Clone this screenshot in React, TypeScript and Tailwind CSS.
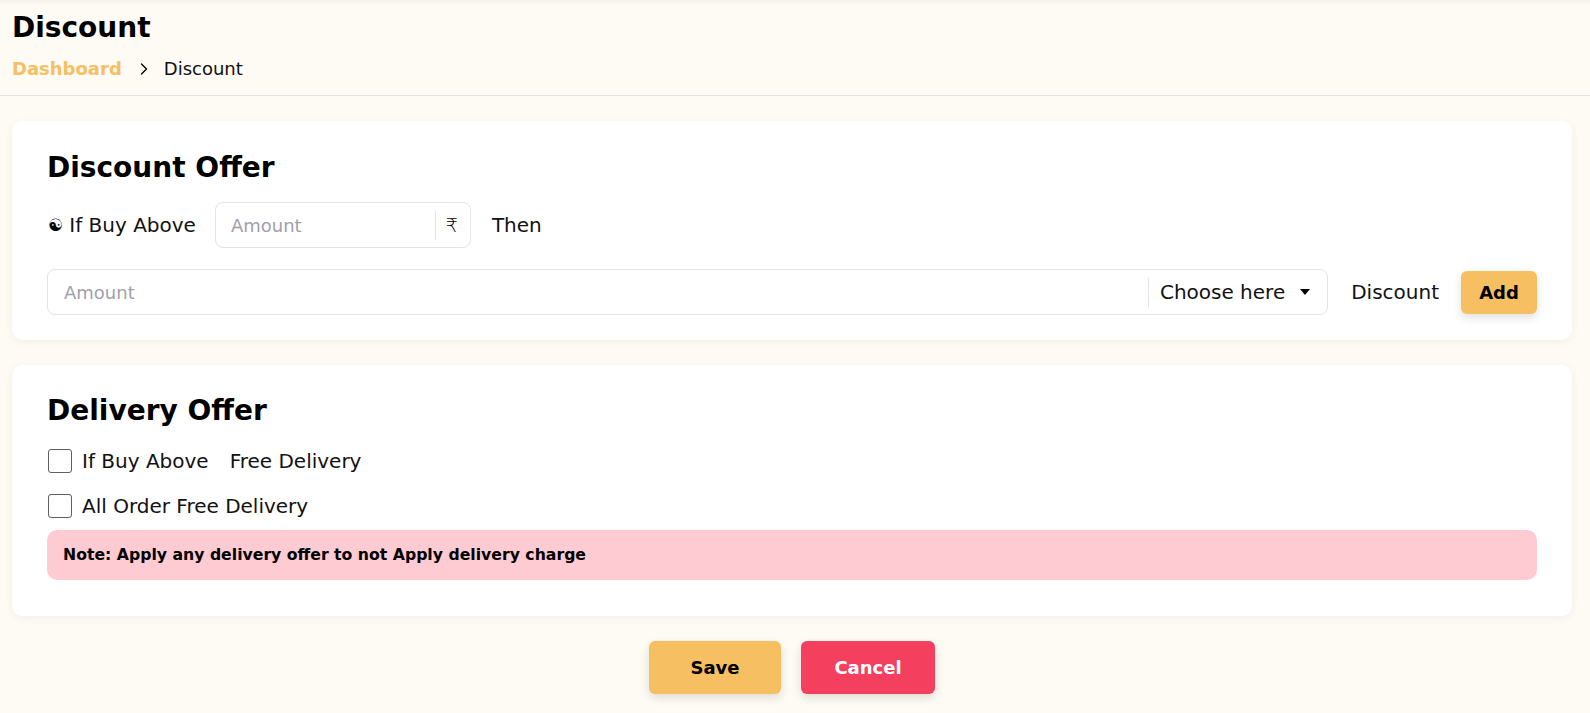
import React from 'react';
import { ChevronRight } from 'lucide-react';

const Checkbox = () => (
  <span className="w-6 h-6 rounded-[3px] border-[1.5px] border-[#5f5f5f] bg-white shrink-0" />
);

export default function App() {
  return (
    <div className="min-h-screen bg-[#fefaf4] text-black font-['DejaVu_Sans','Noto_Sans',sans-serif]">
      <header className="px-3 pt-[11px] pb-[14px] border-b border-[#e4e2e8] shadow-[inset_0_6px_6px_-6px_rgba(0,0,0,0.08)]">
        <h1 className="text-[28px] leading-[34px] font-bold">Discount</h1>
        <nav className="mt-[12px] flex items-center h-6">
          <span className="text-[18px] leading-6 font-bold text-[#f6bf62]">Dashboard</span>
          <ChevronRight size={20} strokeWidth={1.6} className="ml-[12px] text-black" />
          <span className="ml-[10px] text-[18px] leading-6 text-[#111]">Discount</span>
        </nav>
      </header>

      <main className="pl-3 pr-[18px] pt-[25px]">
        <section className="bg-white rounded-[10px] shadow-[0_2px_10px_rgba(0,0,0,0.05)] px-[35px] pt-[30px] pb-[25px]">
          <h2 className="text-[28px] leading-[34px] font-bold">Discount Offer</h2>

          <div className="mt-[17px] flex items-center h-[46px]">
            <span className="ml-px text-[17px] leading-none">☯</span>
            <span className="ml-[6px] text-[20px] text-[#111]">If Buy Above</span>
            <div className="ml-[19px] w-[256px] h-[46px] border border-[#e3e3e8] rounded-lg flex items-center">
              <input
                placeholder="Amount"
                className="min-w-0 flex-1 pl-[15px] bg-transparent outline-none text-[18px] placeholder:text-[#a1a1aa]"
              />
              <span className="w-px h-[29px] bg-[#e3e3e3]" />
              <span className="ml-[10px] mr-[12px] text-[19px] font-light">₹</span>
            </div>
            <span className="ml-[21px] text-[20px] text-[#111]">Then</span>
          </div>

          <div className="mt-[21px] flex items-center">
            <div className="flex-1 h-[46px] border border-[#e3e3e8] rounded-lg flex items-center">
              <input
                placeholder="Amount"
                className="min-w-0 flex-1 pl-4 bg-transparent outline-none text-[18px] placeholder:text-[#a1a1aa]"
              />
              <span className="w-px h-[29px] bg-[#e3e3e3]" />
              <span className="ml-[11px] text-[20px] text-[#111]">Choose here</span>
              <span className="ml-[15px] mr-[17px] w-0 h-0 border-x-[5px] border-x-transparent border-t-[6px] border-t-black" />
            </div>
            <span className="ml-[23px] text-[20px] text-[#111]">Discount</span>
            <button className="ml-[22px] w-[76px] h-[43px] rounded-md bg-[#f6bf62] shadow-[0_4px_10px_rgba(0,0,0,0.12)] text-[18px] font-bold">
              Add
            </button>
          </div>
        </section>

        <section className="mt-[25px] bg-white rounded-[10px] shadow-[0_2px_10px_rgba(0,0,0,0.05)] px-[35px] pt-[29px] pb-[36px]">
          <h2 className="text-[28px] leading-[34px] font-bold">Delivery Offer</h2>

          <div className="mt-[21px] flex items-center h-6 pl-px">
            <Checkbox />
            <span className="ml-[10px] text-[20px] text-[#111]">If Buy Above</span>
            <span className="ml-[21px] text-[20px] text-[#111]">Free Delivery</span>
          </div>

          <div className="mt-[21px] flex items-center h-6 pl-px">
            <Checkbox />
            <span className="ml-[10px] text-[20px] text-[#111]">All Order Free Delivery</span>
          </div>

          <div className="mt-[12px] h-[50px] rounded-[10px] bg-[#ffcbd3] px-4 flex items-center text-[15.7px] font-bold">
            Note: Apply any delivery offer to not Apply delivery charge
          </div>
        </section>

        <div className="mt-[25px] flex justify-center gap-5">
          <button className="w-[132px] h-[53px] rounded-md bg-[#f6bf62] shadow-[0_4px_10px_rgba(0,0,0,0.12)] text-[18px] font-bold">
            Save
          </button>
          <button className="w-[134px] h-[53px] rounded-md bg-[#f43f5e] shadow-[0_4px_10px_rgba(0,0,0,0.12)] text-[18px] font-bold text-white">
            Cancel
          </button>
        </div>
      </main>
    </div>
  );
}
